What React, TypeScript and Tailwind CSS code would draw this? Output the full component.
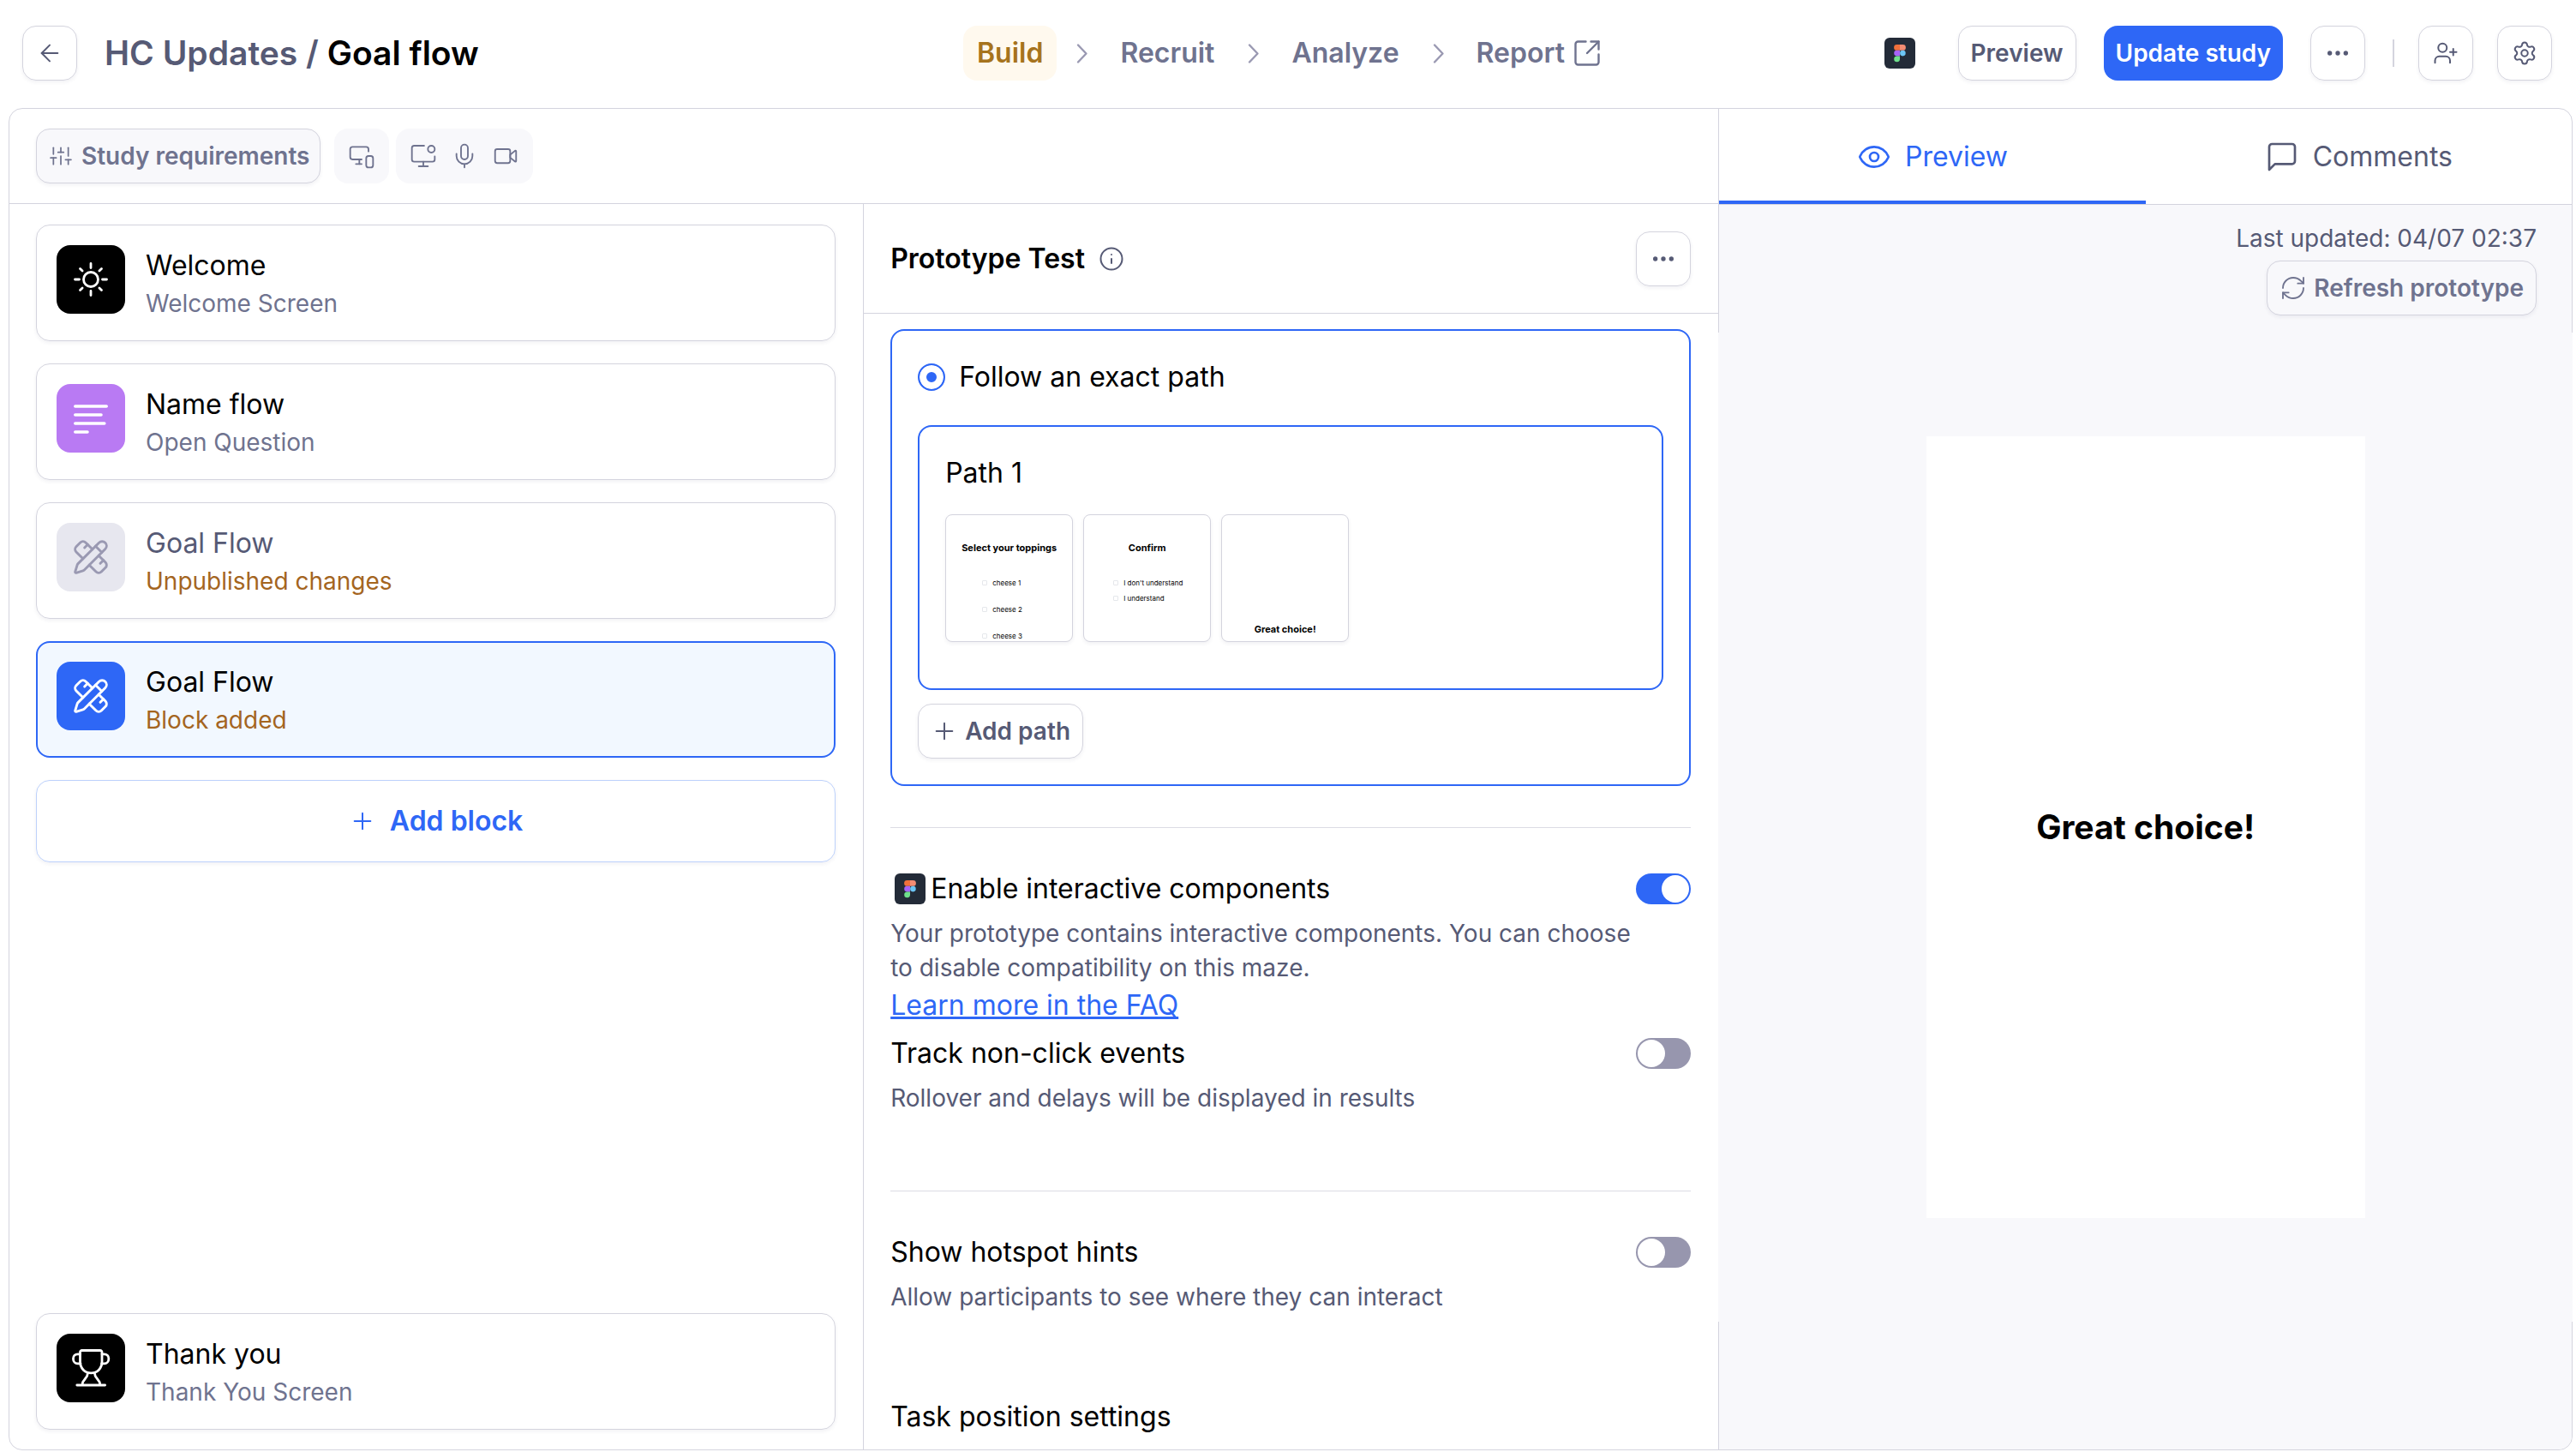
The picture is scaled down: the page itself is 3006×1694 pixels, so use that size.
import { useState } from "react";
import clsx from "clsx";
import {
    ArrowLeft,
    Ellipsis,
    Eye,
    Info,
    Mic,
    MonitorDot,
    MonitorSmartphone,
    PencilRuler,
    Plus,
    RefreshCw,
    Settings,
    SquareArrowOutUpRight,
    UserPlus,
} from "lucide-react";
import { FiMessageSquare, FiSliders } from "react-icons/fi";

type IconName = "sun" | "lines" | "tools" | "trophy"

interface BlockI {
    id: number
    title: string
    subtitle: string
    icon: IconName
    tile: string
    titleColor?: string
    subtitleColor?: string
}

const blocks: BlockI[] = [
    { id: 1, title: "Welcome", subtitle: "Welcome Screen", icon: "sun", tile: "bg-black text-white" },
    { id: 2, title: "Name flow", subtitle: "Open Question", icon: "lines", tile: "bg-[#b97af3] text-white" },
    { id: 3, title: "Goal Flow", subtitle: "Unpublished changes", icon: "tools", tile: "bg-[#e7e7ef] text-[#9a99b2]", titleColor: "text-[#565a75]", subtitleColor: "text-[#a4651f]" },
    { id: 4, title: "Goal Flow", subtitle: "Block added", icon: "tools", tile: "bg-[#2e67f6] text-white", subtitleColor: "text-[#a4651f]" },
]

const thankYou: BlockI = { id: 5, title: "Thank you", subtitle: "Thank You Screen", icon: "trophy", tile: "bg-black text-white" }

const outlineButton = "flex h-16 shrink-0 items-center justify-center rounded-2xl border border-[#d4d4de] text-[28px] leading-10 font-semibold shadow-[0_2px_4px_rgba(60,60,100,0.07)]"

const FigmaTile: React.FC = () => (
    <svg viewBox="0 0 36 36" className="size-9 shrink-0" aria-hidden="true">
        <rect width="36" height="36" rx="6" fill="#232b38" />
        <path d="M14.5 8H18v6.8h-3.5a3.4 3.4 0 0 1 0-6.8Z" fill="#f0703c" />
        <path d="M18 8h3.5a3.4 3.4 0 0 1 0 6.8H18Z" fill="#f48c73" />
        <path d="M14.5 14.8H18v6.6h-3.5a3.3 3.3 0 0 1 0-6.6Z" fill="#a763f8" />
        <circle cx="21.4" cy="18.1" r="3.3" fill="#6cc5f5" />
        <path d="M14.5 21.4H18v3.3a3.4 3.4 0 1 1-3.5-3.3Z" fill="#6fe08c" />
    </svg>
)

const VideoIcon: React.FC = () => (
    <svg viewBox="0 0 24 24" className="size-8" fill="none" stroke="currentColor" strokeWidth="1.4" strokeLinejoin="round" aria-hidden="true">
        <rect x="2.8" y="6" width="13.2" height="12.2" rx="1.8" />
        <path d="m16 10.8 4.3-3.4c.4-.3.9-.1.9.4v8.6c0 .5-.5.7-.9.4L16 13.4Z" />
    </svg>
)

const Chevron: React.FC = () => (
    <svg viewBox="0 0 58 40" className="h-10 w-[58px]" fill="none" stroke="#9a99b2" strokeWidth="2.4" strokeLinecap="round" strokeLinejoin="round" aria-hidden="true">
        <path d="m25 10.5 9.500 10-9.500 10" />
    </svg>
)

function BlockIcon({ name }: { name: IconName }) {
    if (name === "tools") {
        return <PencilRuler size={44} strokeWidth={1.6} />
    }
    return (
        <svg viewBox="0 0 80 80" className="size-20" fill="none" stroke="currentColor" strokeWidth="2.8" strokeLinecap="round" strokeLinejoin="round" aria-hidden="true">
            {name === "sun" && (
                <>
                    <circle cx="40" cy="40" r="8.5" />
                    <path d="M40 21.5v5M40 53.5v5M21.5 40h5M53.5 40h5M27.5 27.5l2.6 2.6M49.9 49.9l2.6 2.6M27.5 52.5l2.6-2.6M49.9 30.1l2.6-2.6" />
                </>
            )}
            {name === "lines" && <path strokeWidth="3.6" d="M21.8 26h36.4M21.8 36h30.2M21.8 46h34M21.8 56h14.2" />}
            {name === "trophy" && (
                <>
                    <path d="M27.5 22a2.2 2.2 0 0 1 2.2-2.5h21.1a2.2 2.2 0 0 1 2.2 2.5v10.5c0 8-5.5 13.3-12.7 13.3S27.5 40.5 27.5 32.5Z" />
                    <path d="M27.5 23.8h-3a5 5 0 0 0-5 5v1a5 5 0 0 0 5 5H28M53 23.8h2.8a5 5 0 0 1 5 5v1a5 5 0 0 1-5 5h-3.2" />
                    <path d="M36.3 46.5c0 6-6.3 6.500-6.3 13M44.5 46.5c0 6 6.3 6.500 6.3 13M23.8 60h32.8" />
                </>
            )}
        </svg>
    )
}

function BlockCard({ block, active, onClick }: { block: BlockI, active: boolean, onClick: () => void }) {
    return (
        <button
            onClick={onClick}
            className={clsx(
                "w-full rounded-2xl text-left",
                active
                    ? "border-2 border-[#2e67f6] bg-[#f2f8ff] p-[22px]"
                    : "border border-[#d4d4de] p-[23px] shadow-[0_2px_4px_rgba(60,60,100,0.07)]",
            )}
        >
            <span className="flex items-start gap-6">
                <span className={clsx("flex size-20 shrink-0 items-center justify-center rounded-2xl", block.tile)}>
                    <BlockIcon name={block.icon} />
                </span>
                <span>
                    <span className={clsx("block text-[32px] leading-[48px]", block.titleColor ?? "text-black")}>{block.title}</span>
                    <span className={clsx("block text-[28px] leading-10", block.subtitleColor ?? "text-[#6f738f]")}>{block.subtitle}</span>
                </span>
            </span>
        </button>
    )
}

function SettingRow({ id, label, description, checked, onChange, logo, children }: {
    id: string
    label: string
    description: string
    checked: boolean
    onChange: () => void
    logo?: boolean
    children?: React.ReactNode
}) {
    return (
        <div>
            <div className="flex items-center justify-between">
                <label htmlFor={id} className="flex items-center text-[32px] leading-[48px] text-black">
                    {logo && <span className="mr-1.5 ml-[5px]"><FigmaTile /></span>}
                    {label}
                </label>
                <input
                    id={id}
                    type="checkbox"
                    role="switch"
                    checked={checked}
                    onChange={onChange}
                    className="flex h-9 w-16 shrink-0 appearance-none rounded-full bg-[#9796ae] p-0.5 before:size-8 before:rounded-full before:bg-white checked:justify-end checked:bg-[#2e67f6]"
                />
            </div>
            <p className="mt-2 mr-16 text-[28px] leading-10 text-[#565a75]">{description}</p>
            {children}
        </div>
    )
}

function ThumbOption({ label }: { label: string }) {
    return (
        <span className="flex items-center gap-1.5">
            <span className="size-1.5 rounded-[1px] border border-gray-200"></span>
            {label}
        </span>
    )
}

const thumb = "size-[149px] overflow-hidden rounded-lg border border-[#d4d4de] bg-white text-black shadow-[0_2px_4px_rgba(60,60,100,0.07)]"

function App() {
    const [activeBlock, setActiveBlock] = useState(4)
    const [interactive, setInteractive] = useState(true)
    const [trackEvents, setTrackEvents] = useState(false)
    const [hotspots, setHotspots] = useState(false)

    return (
        <div className="flex h-screen flex-col overflow-hidden bg-white font-[Inter,'Liberation_Sans',sans-serif] text-[#565a75]">
            <header className="grid h-[126px] shrink-0 grid-cols-[1fr_auto_1fr] items-center pr-7 pb-0.5 pl-8">
                <div className="-ml-1.5 flex items-center gap-8">
                    <button aria-label="Back" className={clsx(outlineButton, "w-16")}>
                        <ArrowLeft size={32} strokeWidth={1.5} />
                    </button>
                    <h1 className="text-[39px] leading-[48px] font-semibold whitespace-nowrap">
                        HC Updates / <span className="text-black">Goal flow</span>
                    </h1>
                </div>
                <nav className="flex items-center text-[32px] leading-[48px] font-semibold text-[#6f738f]">
                    <a href="#build" className="rounded-2xl bg-[#fff9ee] px-4 py-2 text-[#a6731d]">Build</a>
                    <Chevron />
                    <a href="#recruit" className="px-4 py-2">Recruit</a>
                    <Chevron />
                    <a href="#analyze" className="px-4 py-2">Analyze</a>
                    <Chevron />
                    <a href="#report" className="flex items-center gap-2 px-4 py-2">
                        Report
                        <SquareArrowOutUpRight size={36} strokeWidth={1.6} />
                    </a>
                </nav>
                <div className="flex items-center justify-end gap-8">
                    <span className="mr-[18px]"><FigmaTile /></span>
                    <button className={clsx(outlineButton, "px-[14px]")}>Preview</button>
                    <button className="h-16 rounded-2xl bg-[#2e67f6] px-[14px] text-[28px] leading-10 font-semibold whitespace-nowrap text-white">Update study</button>
                    <button aria-label="More actions" className={clsx(outlineButton, "w-16")}>
                        <Ellipsis size={32} strokeWidth={2} />
                    </button>
                    <div className="flex items-center gap-7">
                        <span className="h-8 w-0.5 bg-[#d4d4de]"></span>
                        <button aria-label="Invite" className={clsx(outlineButton, "w-16")}>
                            <UserPlus size={30} strokeWidth={1.6} />
                        </button>
                        <button aria-label="Settings" className={clsx(outlineButton, "w-16")}>
                            <Settings size={30} strokeWidth={1.6} />
                        </button>
                    </div>
                </div>
            </header>

            <main className="mr-1 mb-0.5 ml-2.5 flex min-h-0 flex-1 rounded-2xl border border-[#d4d4de]">
                <div className="flex min-w-0 flex-1 flex-col">
                    <div className="flex h-[111px] shrink-0 items-center border-b border-[#d4d4de] pl-[31px] text-[#6f738f]">
                        <button className={clsx(outlineButton, "mr-4 gap-2 bg-[#f8f8fb] px-3")}>
                            <FiSliders size={32} strokeWidth={1.6} className="p-[3px]" />
                            Study requirements
                        </button>
                        <span className="mr-2 flex size-16 items-center justify-center rounded-2xl bg-[#f8f8fb]">
                            <MonitorSmartphone size={32} strokeWidth={1.4} />
                        </span>
                        <span className="flex h-16 items-center gap-4 rounded-2xl bg-[#f8f8fb] px-4">
                            <MonitorDot size={32} strokeWidth={1.4} />
                            <Mic size={32} strokeWidth={1.4} />
                            <VideoIcon />
                        </span>
                    </div>

                    <div className="grid min-h-0 flex-1 grid-cols-2">
                        <section className="flex flex-col gap-[26px] border-r border-[#d4d4de] pt-6 pr-8 pb-[23px] pl-[31px]">
                            {blocks.map(block => (
                                <BlockCard key={block.id} block={block} active={activeBlock === block.id} onClick={() => setActiveBlock(block.id)} />
                            ))}
                            <button className="flex h-24 w-full shrink-0 items-center justify-center gap-4 rounded-2xl border border-[#bdd1fb] text-[32px] font-semibold text-[#2e67f6] shadow-[0_2px_4px_rgba(60,60,100,0.07)]">
                                <Plus size={32} strokeWidth={1.5} />
                                Add block
                            </button>
                            <div className="mt-auto">
                                <BlockCard block={thankYou} active={activeBlock === thankYou.id} onClick={() => setActiveBlock(thankYou.id)} />
                            </div>
                        </section>

                        <section className="flex min-h-0 flex-col">
                            <div className="flex h-32 shrink-0 items-center border-b border-[#d4d4de] pr-8 pl-[31px]">
                                <h2 className="text-[32px] leading-[48px] font-semibold text-black">Prototype Test</h2>
                                <Info size={30} strokeWidth={1.6} className="ml-4" />
                                <button aria-label="Block actions" className={clsx(outlineButton, "ml-auto w-16")}>
                                    <Ellipsis size={32} strokeWidth={2} />
                                </button>
                            </div>

                            <div className="min-h-0 flex-1 overflow-hidden pt-[18px] pr-8 pl-[31px]">
                                <div className="rounded-2xl border-2 border-[#2e67f6] p-[30px]">
                                    <div className="flex items-center gap-4">
                                        <input
                                            id="exact-path"
                                            type="radio"
                                            name="path-type"
                                            defaultChecked
                                            className="size-8 appearance-none rounded-full border-2 border-[#2e67f6] bg-white checked:bg-[#2e67f6] checked:shadow-[inset_0_0_0_8px_#fff]"
                                        />
                                        <label htmlFor="exact-path" className="text-[32px] leading-[48px] text-black">Follow an exact path</label>
                                    </div>
                                    <div className="mt-8 rounded-2xl border-2 border-[#2e67f6] px-[30px] pt-[30px] pb-[54px]">
                                        <h3 className="text-[32px] leading-[48px] text-black">Path 1</h3>
                                        <div className="mt-6 flex gap-3">
                                            <div className={thumb}>
                                                <p className="mt-[30px] text-center text-[11px] leading-4 font-bold whitespace-nowrap">Select your toppings</p>
                                                <div className="mt-7 ml-[42px] flex flex-col gap-[21px] text-[8px] leading-[10px]">
                                                    <ThumbOption label="cheese 1" />
                                                    <ThumbOption label="cheese 2" />
                                                    <ThumbOption label="cheese 3" />
                                                </div>
                                            </div>
                                            <div className={thumb}>
                                                <p className="mt-[30px] text-center text-[11px] leading-4 font-bold">Confirm</p>
                                                <div className="mt-7 ml-[34px] flex flex-col gap-2 text-[8px] leading-[10px] whitespace-nowrap">
                                                    <ThumbOption label="I don't understand" />
                                                    <ThumbOption label="I understand" />
                                                </div>
                                            </div>
                                            <div className={clsx(thumb, "flex items-end justify-center pb-1.5")}>
                                                <p className="text-[11px] leading-4 font-bold">Great choice!</p>
                                            </div>
                                        </div>
                                    </div>
                                    <button className={clsx(outlineButton, "mt-4 gap-2 px-[14px]")}>
                                        <Plus size={32} strokeWidth={1.5} />
                                        Add path
                                    </button>
                                </div>

                                <hr className="mt-12 mb-[47px] border-[#dcdce4]" />

                                <SettingRow
                                    id="interactive"
                                    logo
                                    label="Enable interactive components"
                                    description="Your prototype contains interactive components. You can choose to disable compatibility on this maze."
                                    checked={interactive}
                                    onChange={() => setInteractive(!interactive)}
                                >
                                    <a href="#faq" className="block w-fit text-[32px] leading-[48px] text-[#2e67f6] underline">Learn more in the FAQ</a>
                                </SettingRow>
                                <div className="mt-2">
                                    <SettingRow
                                        id="track"
                                        label="Track non-click events"
                                        description="Rollover and delays will be displayed in results"
                                        checked={trackEvents}
                                        onChange={() => setTrackEvents(!trackEvents)}
                                    />
                                </div>

                                <hr className="mt-[88px] mb-[47px] border-[#dcdce4]" />

                                <SettingRow
                                    id="hotspots"
                                    label="Show hotspot hints"
                                    description="Allow participants to see where they can interact"
                                    checked={hotspots}
                                    onChange={() => setHotspots(!hotspots)}
                                />
                                <h3 className="mt-24 text-[32px] leading-[48px] text-black">Task position settings</h3>
                            </div>
                        </section>
                    </div>
                </div>

                <aside className="flex w-[33.3%] shrink-0 flex-col border-l border-[#d4d4de]">
                    <div className="grid h-28 shrink-0 grid-cols-2 border-b border-[#d4d4de] text-[32px]">
                        <button className="flex items-center justify-center gap-4 border-b-4 border-[#2e67f6] pt-1 text-[#2e67f6]">
                            <Eye size={40} strokeWidth={1.6} />
                            Preview
                        </button>
                        <button className="flex items-center justify-center gap-4">
                            <FiMessageSquare size={40} strokeWidth={1.6} />
                            Comments
                        </button>
                    </div>
                    <div className="grid min-h-0 flex-1 rounded-br-2xl bg-[#f8f8fb]">
                        {/* prototype canvas runs edge to edge, over the side borders */}
                        <div className="-mx-px flex h-[1154px] items-center justify-center self-center bg-[#f8f8fb] [grid-area:1/1]">
                            <div className="flex h-[912px] w-[512px] items-center justify-center bg-white">
                                <p className="text-[39px] leading-[48px] font-bold text-black">Great choice!</p>
                            </div>
                        </div>
                        <div className="z-10 mt-[19px] mr-[41px] flex flex-col items-end gap-1.5 self-start justify-self-end [grid-area:1/1]">
                            <p className="text-[28px] leading-10">Last updated: 04/07 02:37</p>
                            <button className={clsx(outlineButton, "gap-2 bg-[#f8f8fb] px-[14px] text-[#6f738f]")}>
                                <RefreshCw size={32} strokeWidth={1.4} />
                                Refresh prototype
                            </button>
                        </div>
                    </div>
                </aside>
            </main>
        </div>
    );
}

export default App;
